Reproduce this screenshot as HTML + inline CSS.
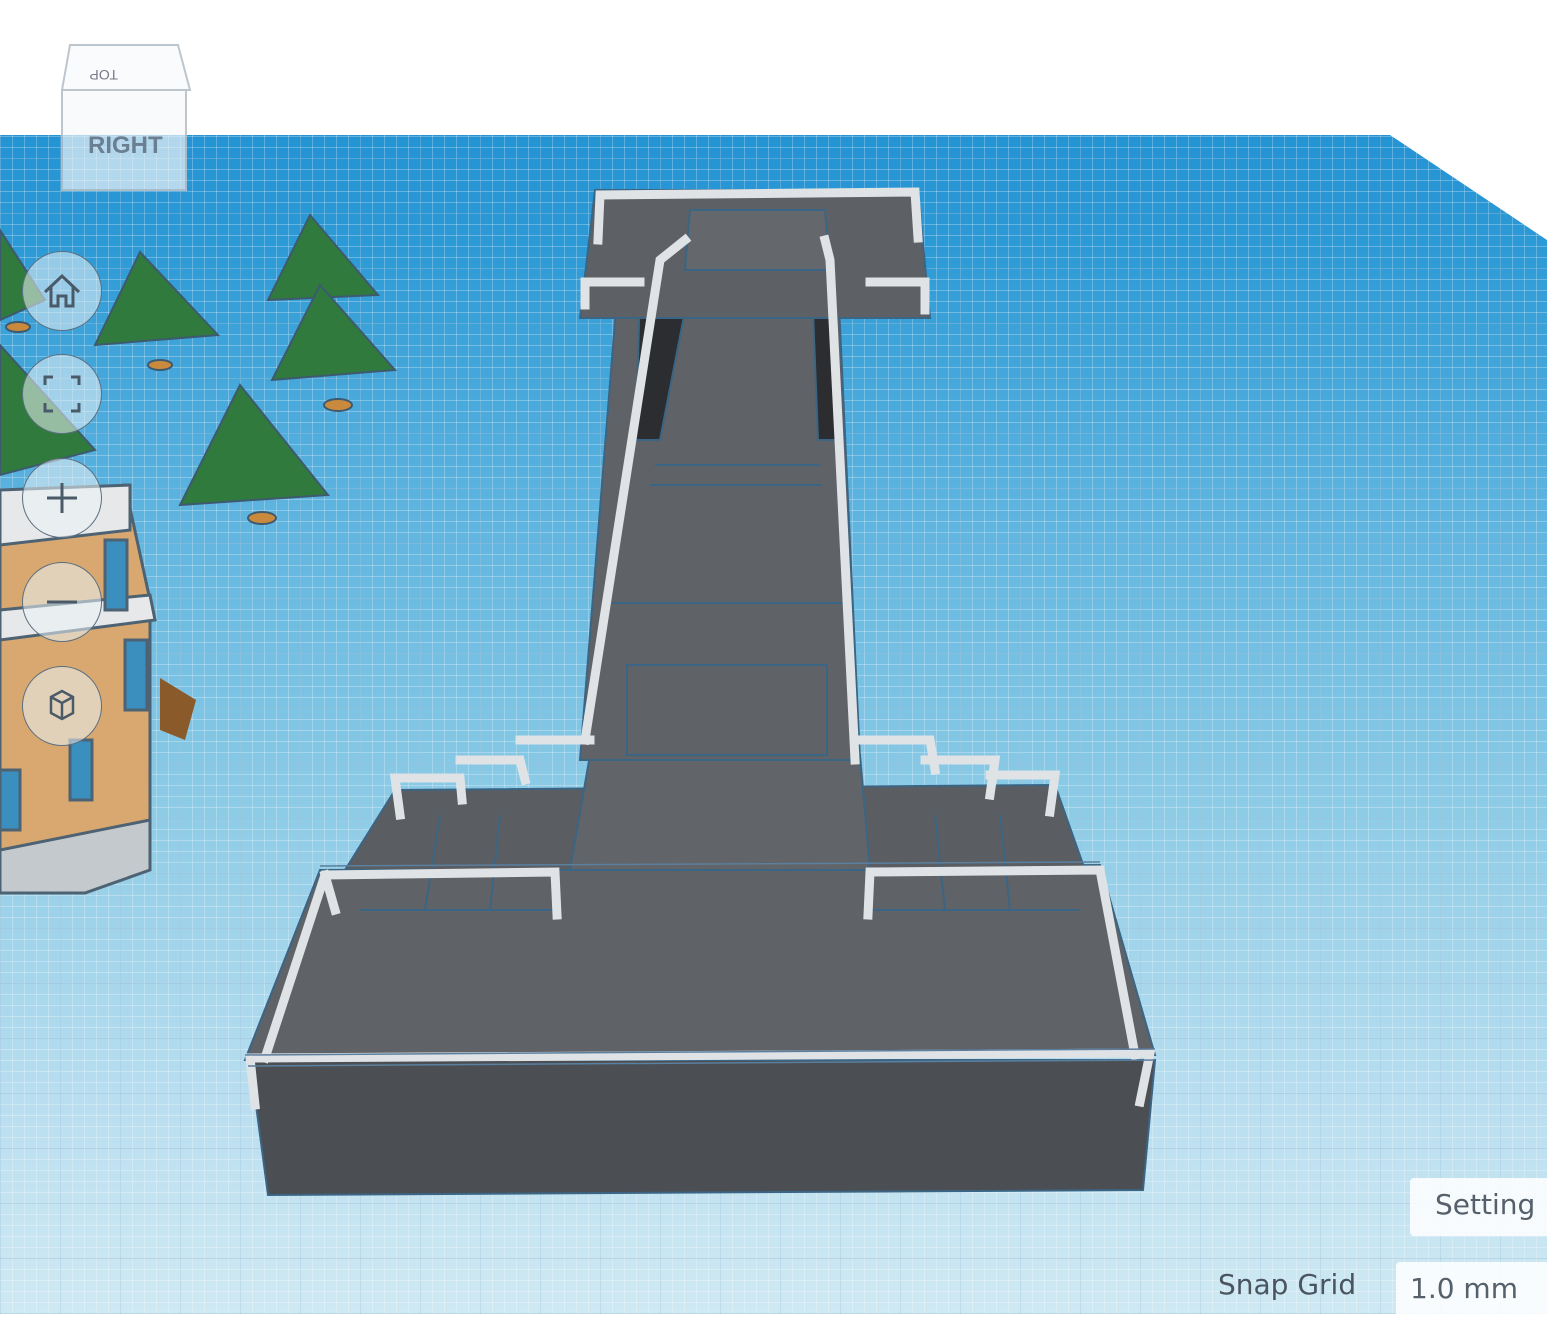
<!DOCTYPE html>
<html><head><style>
body{margin:0;width:1547px;height:1314px;overflow:hidden;background:#fff;font-family:"Liberation Sans",sans-serif;position:relative}
svg{position:absolute;left:0;top:0}
.grid{position:absolute;left:0;top:0;width:1547px;height:1314px;
clip-path:polygon(0 135px,1390px 135px,1547px 240px,1547px 1314px,0 1314px);
background:
repeating-linear-gradient(0deg,rgba(40,110,160,.18) 0 1px,transparent 1px 55px),
repeating-linear-gradient(90deg,rgba(40,110,160,.15) 0 1px,transparent 1px 60px),
repeating-linear-gradient(0deg,rgba(255,255,255,.28) 0 1px,transparent 1px 11px),
repeating-linear-gradient(90deg,rgba(255,255,255,.25) 0 1px,transparent 1px 12px),
linear-gradient(180deg,#1a8bd0 0px,#2d9ad6 250px,#5cb3df 500px,#8ccbe6 800px,#b9def0 1100px,#cfe9f3 1314px);}
.btn{position:absolute;left:22px;width:78px;height:78px;border-radius:50%;border:1.5px solid #5b6f80;background:rgba(235,242,246,.55)}
.lbl{position:absolute;font-family:"DejaVu Sans",sans-serif;color:#55606a;font-size:28px}
</style></head><body>
<div class="grid"></div>
<svg width="1547" height="1314" viewBox="0 0 1547 1314">
<g stroke="#b8c0c8" stroke-width="2" fill="#fafbfc" opacity=".9">
<polygon points="70,45 178,45 190,90 62,90"/>
<rect x="62" y="90" width="124" height="100" fill="rgba(245,248,250,.75)"/>
</g>
<text x="88" y="153" font-size="24" font-weight="bold" fill="#6a7f91" font-family="Liberation Sans">RIGHT</text>
<text x="118" y="58" font-size="14" fill="#778" transform="rotate(180 118 64)">TOP</text>
<g fill="#2f7a3c" stroke="#3d5a70" stroke-width="2">
<polygon points="310,215 378,295 268,300"/><ellipse cx="320" cy="310" rx="12" ry="5" fill="#c98a3e"/>
<polygon points="140,252 218,335 95,345"/><ellipse cx="160" cy="365" rx="12" ry="5" fill="#c98a3e"/>
<polygon points="320,285 395,370 272,380"/><ellipse cx="338" cy="405" rx="14" ry="6" fill="#c98a3e"/>
<polygon points="240,385 328,495 180,505"/><ellipse cx="262" cy="518" rx="14" ry="6" fill="#c98a3e"/>
<polygon points="0,230 45,300 0,320"/><ellipse cx="18" cy="327" rx="12" ry="5" fill="#c98a3e"/>
<polygon points="0,345 95,450 0,475"/>
</g>
<polygon points="0,500 125,485 150,600 150,860 85,893 0,893" fill="#d8a870" stroke="#4d6273" stroke-width="3"/>
<polygon points="0,490 130,485 130,530 0,545" fill="#e6e8ea" stroke="#4d6273" stroke-width="3"/>
<polygon points="0,610 150,595 155,620 0,640" fill="#e6e8ea" stroke="#4d6273" stroke-width="3"/>
<polygon points="0,850 150,820 150,870 85,893 0,893" fill="#c4c9ce" stroke="#4d6273" stroke-width="3"/>
<polygon points="160,678 196,700 185,740 160,730" fill="#8b5a2b"/>
<g fill="#3a8fbf" stroke="#4d6273" stroke-width="3">
<rect x="105" y="540" width="22" height="70"/><rect x="125" y="640" width="22" height="70"/><rect x="70" y="740" width="22" height="60"/><rect x="0" y="770" width="20" height="60"/></g>
<g stroke="#3b6585" stroke-width="2">
<polygon points="320,870 1100,865 1155,1055 245,1060" fill="#5f6266"/>
<polygon points="250,1060 1155,1060 1143,1190 268,1195" fill="#4b4f53"/>
<polygon points="395,790 1055,785 1085,870 345,870" fill="#5a5d61"/>
<polygon points="590,755 860,755 870,870 570,870" fill="#616468"/>
<polygon points="618,283 838,283 860,760 580,760" fill="#5f6266"/>
<polygon points="640,285 690,285 660,440 636,440" fill="#2b2d30"/>
<polygon points="812,285 830,285 840,440 818,440" fill="#2b2d30"/>
<polygon points="595,190 918,190 930,318 580,318" fill="#5d6064"/>
<polygon points="690,210 825,210 830,270 685,270" fill="#64676b"/>
<line x1="650" y1="485" x2="822" y2="485"/><line x1="655" y1="465" x2="820" y2="465"/><line x1="612" y1="603" x2="845" y2="603"/><rect x="627" y="665" width="200" height="90" fill="none"/>
<line x1="360" y1="910" x2="560" y2="910"/><line x1="870" y1="910" x2="1080" y2="910"/>
<line x1="425" y1="910" x2="440" y2="815"/><line x1="490" y1="910" x2="500" y2="815"/><line x1="1010" y1="910" x2="1000" y2="815"/><line x1="945" y1="910" x2="935" y2="815"/>
</g>
<g fill="none" stroke="#dfe3e6" stroke-width="9" stroke-linecap="square">
<polyline points="255,1105 250,1058 1150,1053 1140,1102"/>
<polyline points="265,1058 325,875 555,872 557,915"/>
<polyline points="1135,1055 1100,870 870,872 868,915"/>
<polyline points="335,910 325,875"/>
<polyline points="400,815 395,778 460,778 462,800"/>
<polyline points="460,760 520,760 525,780"/><polyline points="520,740 590,740"/>
<polyline points="585,740 660,260 685,240"/><polyline points="855,760 830,260 825,240"/>
<polyline points="855,740 930,740 935,770"/><polyline points="925,760 995,760 990,795"/><polyline points="990,775 1055,775 1050,812"/>
<polyline points="598,240 600,195 915,192 918,238"/>
<polyline points="585,305 585,282 640,282"/><polyline points="925,310 925,282 870,282"/>
</g>
<g fill="none" stroke="#5b7f9e" stroke-width="1.5">
<polyline points="245,1055 1155,1049"/><polyline points="248,1066 1155,1060"/>
<polyline points="320,866 1100,862"/>
</g>
</svg>
<div class="btn" style="top:251px"><svg width="78" height="78" style="position:static"><path d="M22 40 L39 24 L56 40 M28 35 V54 H35 V44 H43 V54 H50 V35" fill="none" stroke="#4a5a68" stroke-width="3"/></svg></div>
<div class="btn" style="top:354px"><svg width="78" height="78" style="position:static"><path d="M22 30 V22 H30 M48 22 H56 V30 M56 48 V56 H48 M30 56 H22 V48" fill="none" stroke="#4a5a68" stroke-width="3"/></svg></div>
<div class="btn" style="top:458px"><svg width="78" height="78" style="position:static"><path d="M39 24 V54 M24 39 H54" stroke="#4a5a68" stroke-width="3"/></svg></div>
<div class="btn" style="top:562px"><svg width="78" height="78" style="position:static"><path d="M24 39 H54" stroke="#4a5a68" stroke-width="3"/></svg></div>
<div class="btn" style="top:666px"><svg width="78" height="78" style="position:static"><path d="M28 30 L39 24 L50 30 V46 L39 52 L28 46 Z M28 30 L39 36 L50 30 M39 36 V52" fill="none" stroke="#4a5a68" stroke-width="2.5"/></svg></div>
<div style="position:absolute;left:1410px;top:1178px;width:160px;height:58px;background:rgba(255,255,255,.85);border-radius:4px"></div>
<div class="lbl" style="left:1435px;top:1188px">Setting</div>
<div style="position:absolute;left:1396px;top:1262px;width:160px;height:60px;background:rgba(255,255,255,.85);border-radius:4px"></div>
<div class="lbl" style="left:1410px;top:1272px">1.0 mm</div>
<div class="lbl" style="left:1218px;top:1268px;color:#4a5560">Snap Grid</div>
</body></html>
